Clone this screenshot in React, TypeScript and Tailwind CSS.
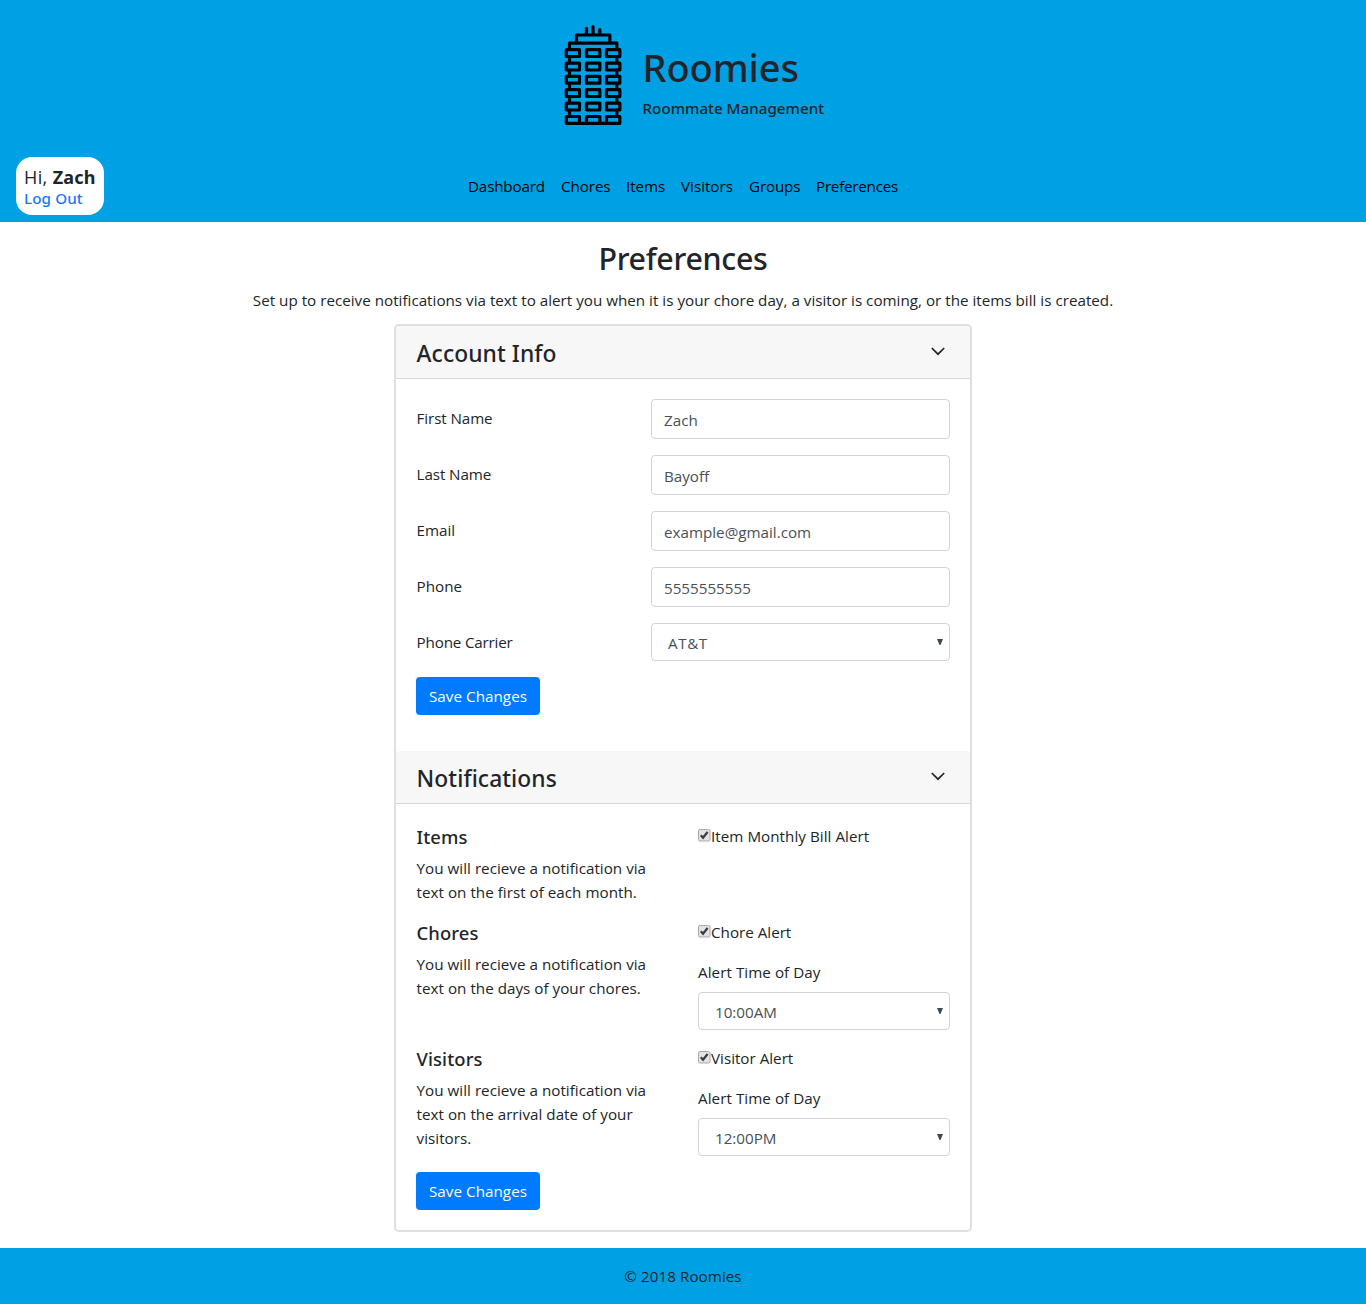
import React from "react";

const windowRows = [104, 144.5, 184, 224, 264.5];

function Building() {
  return (
    <svg viewBox="0 0 270 360" className="h-[120px] w-[90px] shrink-0" fill="none" stroke="#000" strokeWidth="9.6" strokeLinejoin="round" strokeLinecap="round">
      <path d="M109.500 40V58M129 35V58M149.500 44V58" />
      <path d="M79.500 84V60H179.500V84" />
      <path d="M58.500 102V84.500H200.500V102" />
      {windowRows.map((y) => (
        <g key={y}>
          <rect x="49" y={y} width="39.500" height="20.500" />
          <rect x="109.500" y={y} width="40" height="20.500" />
          <rect x="169.500" y={y} width="40" height="20.500" />
          <path d={`M58.500 ${y + 21}V${y + 39}M200.500 ${y + 21}V${y + 39}`} />
        </g>
      ))}
      <path d="M49 304.500H88.500V324M49 304.500V325H209.500V304.500H169.500V324M109.500 324V304.500H149.500V324" />
    </svg>
  );
}

const navLinks = [
  { label: "Dashboard", style: "w-[77px] tracking-[-0.16px]" },
  { label: "Chores", style: "w-[49px] tracking-[-0.08px]" },
  { label: "Items", style: "w-[39px] tracking-[-0.08px]" },
  { label: "Visitors", style: "w-[52px]" },
  { label: "Groups", style: "w-[51px] tracking-[-0.16px]" },
  { label: "Preferences", style: "w-[82px] tracking-[-0.24px]" },
];

function SectionHeader({ title }: { title: string }) {
  return (
    <div className="flex h-[53px] items-start justify-between rounded-t-[3px] border-b border-[#d8d8d8] bg-[#f7f7f7] pr-[25px] pl-[20.600px]">
      <h4 className="pt-[14px] font-['Noto_Sans'] text-[22.8px] leading-[28px] font-medium tracking-[0.08px]">{title}</h4>
      <svg viewBox="0 0 14 9" className="mt-[21px] h-[9px] w-[14px]" fill="none" stroke="#212529" strokeWidth="1.7">
        <path d="M0.800 1L7 7.200L13.200 1" />
      </svg>
    </div>
  );
}

function TextField({ label, value, style = "" }: { label: string; value: string; style?: string }) {
  return (
    <div className="mb-4 flex h-10 items-start justify-between">
      <label className={`pt-[7px] pl-[0.600px] ${style}`}>{label}</label>
      <div className="flex h-10 w-[299px] items-start rounded border border-[#ced4da] bg-white px-3 pt-[8px] text-[#495057]">{value}</div>
    </div>
  );
}

function SelectBox({ value, style = "" }: { value: string; style?: string }) {
  return (
    <div className="flex h-[38px] w-full items-start justify-between rounded border border-[#ced4da] bg-white pt-[7px] pr-[6px] pl-[16px] text-[#495057]">
      <span className={style}>{value}</span>
      <svg viewBox="0 0 6 6" className="mt-[8px] h-[6px] w-[6px]" fill="#404850">
        <path d="M0 0H6L3.500 6H2.500Z" />
      </svg>
    </div>
  );
}

function SaveButton() {
  return (
    <button className="block h-[38px] w-[124px] rounded bg-[#007bff] text-center tracking-[0.05px] text-white">Save Changes</button>
  );
}

function CheckRow({ label, style = "" }: { label: string; style?: string }) {
  return (
    <div className="flex items-start">
      <svg viewBox="0 0 13 13" className="mt-[5px] h-[13px] w-[13px] shrink-0">
        <rect x="0.500" y="0.500" width="11.500" height="11.500" rx="1.500" fill="#e3e3e3" stroke="#a9a9a9" />
        <path d="M2.800 6.300L5 8.700L9.600 3" fill="none" stroke="#3c3c3c" strokeWidth="2.200" />
      </svg>
      <span className={style}>{label}</span>
    </div>
  );
}

function AlertRow({ title, lines, check, time, checkStyle, className }: { title: string; lines: string[]; check: string; time?: string; checkStyle?: string; className: string }) {
  return (
    <div className={`flex justify-between ${className}`}>
      <div className="w-[250px] pl-[0.600px]">
        <h5 className="mb-[7px] pt-px font-['Noto_Sans'] text-[18.400px] leading-[24px] font-medium tracking-[0.1px]">{title}</h5>
        {lines.map((line) => (
          <p key={line} className="whitespace-nowrap tracking-[0.02px]">{line}</p>
        ))}
      </div>
      <div className="w-[252px]">
        <CheckRow label={check} style={checkStyle} />
        {time && (
          <>
            <p className="mt-4 mb-2 tracking-[0.06px]">Alert Time of Day</p>
            <SelectBox value={time} />
          </>
        )}
      </div>
    </div>
  );
}

export default function App() {
  return (
    <div className="flex h-[1304px] flex-col bg-white font-['Open_Sans','Noto_Sans',sans-serif] text-[15.2px] leading-[24px] text-[#212529]">
      <header className="h-[222px] shrink-0 bg-[#00a0e4]">
        <div className="flex h-[157px] justify-center pt-[15px] pl-[4px]">
          <Building />
          <div className="w-[181px] pt-[28px] pl-[3px] font-['Noto_Sans'] font-medium whitespace-nowrap">
            <h1 className="text-[38px] leading-[48px] tracking-[-0.1px]">Roomies</h1>
            <p className="mt-[5px] text-[15.2px] leading-[24px]">Roommate Management</p>
          </div>
        </div>
        <div className="grid grid-cols-[1fr_auto_1fr] items-start">
          <div className="ml-4 h-[58px] w-[88px] rounded-2xl bg-white px-2 pt-[9px] whitespace-nowrap">
            <p className="text-[18px] leading-[22px] tracking-[0.4px]">
              Hi, <strong className="font-['Noto_Sans'] font-bold tracking-[0.2px]">Zach</strong>
            </p>
            <p className="font-['Noto_Sans'] text-[15.2px] leading-[21px] font-medium tracking-[0.1px] text-[#1677ff]">Log Out</p>
          </div>
          <nav className="flex gap-4 pt-[17px] whitespace-nowrap text-black">
            {navLinks.map((link) => (
              <a key={link.label} className={link.style}>{link.label}</a>
            ))}
          </nav>
        </div>
      </header>

      <main className="flex h-[1026px] shrink-0 flex-col items-center pt-[18px]">
        <h2 className="font-['Noto_Sans'] text-[30.4px] leading-[38px] font-medium tracking-[-0.3px]">Preferences</h2>
        <p className="mt-[10px] whitespace-nowrap tracking-[0.01px]">
          Set up to receive notifications via text to alert you when it is your chore day, a visitor is coming, or the items bill is created.
        </p>
        <section className="mt-[12px] h-[908px] w-[578px] rounded-[5px] border-2 border-[#dfdfdf]">
          <SectionHeader title="Account Info" />
          <div className="h-[372px] px-5 pt-5">
            <TextField label="First Name" value="Zach" style="tracking-[-0.1px]" />
            <TextField label="Last Name" value="Bayoff" style="tracking-[-0.1px]" />
            <TextField label="Email" value="example@gmail.com" />
            <TextField label="Phone" value="5555555555" />
            <div className="mb-4 flex items-start justify-between">
              <label className="pt-[7px] pl-[0.600px] tracking-[-0.18px]">Phone Carrier</label>
              <div className="w-[299px]">
                <SelectBox value="AT&T" style="tracking-[0.6px]" />
              </div>
            </div>
            <SaveButton />
          </div>
          <SectionHeader title="Notifications" />
          <div className="px-5 pt-5">
            <AlertRow className="h-[96px]" title="Items" lines={["You will recieve a notification via", "text on the first of each month."]} check="Item Monthly Bill Alert" checkStyle="tracking-[0.04px]" />
            <AlertRow className="h-[126px]" title="Chores" lines={["You will recieve a notification via", "text on the days of your chores."]} check="Chore Alert" time="10:00AM" />
            <AlertRow className="h-[126px]" title="Visitors" lines={["You will recieve a notification via", "text on the arrival date of your", "visitors."]} check="Visitor Alert" time="12:00PM" />
            <SaveButton />
          </div>
        </section>
      </main>

      <footer className="h-[56px] shrink-0 bg-[#00a0e4] pt-4 text-center tracking-[0.05px]">© 2018 Roomies</footer>
    </div>
  );
}
